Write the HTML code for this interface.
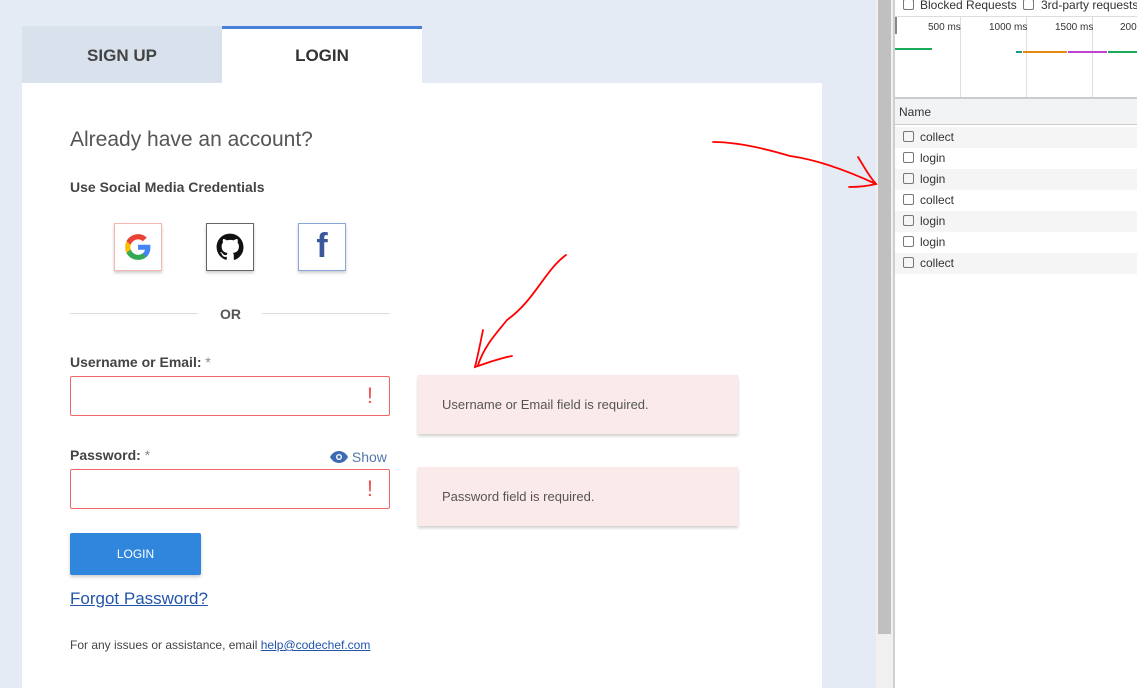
<!DOCTYPE html>
<html><head><style>
*{margin:0;padding:0;box-sizing:border-box}
body{width:1137px;height:688px;overflow:hidden;background:#e4ebf4;font-family:"Liberation Sans",sans-serif;position:relative;color:#444}
.abs{position:absolute;white-space:nowrap}
.tab{position:absolute;top:26px;height:57px;width:200px;text-align:center;line-height:60px;font-size:17px;font-weight:bold}
.inp{position:absolute;left:70px;width:320px;height:40px;border:1px solid #e66;background:#fff;border-radius:2px}
.inp span{position:absolute;right:16px;top:6px;color:#e55;font-size:22px}
.err{position:absolute;left:418px;width:320px;height:59px;background:#fbeaea;box-shadow:0 2px 3px rgba(0,0,0,.2);font-size:13px;color:#555;padding-left:24px;line-height:59px}
.soc{position:absolute;top:223px;width:48px;height:48px;background:#fff;box-shadow:0 2px 3px rgba(0,0,0,.2)}
.row{position:absolute;left:895px;width:242px;height:21px;font-size:12px;color:#333;line-height:21px;padding-left:25px}
.row i{position:absolute;left:8px;top:4px;width:11px;height:11px;border:1px solid #777;border-radius:2px}
</style></head><body>
<div class="tab" style="left:22px;background:#d9e1ec;color:#444">SIGN UP</div>
<div class="tab" style="left:222px;background:#fff;border-top:3px solid #4a80d8;line-height:54px;color:#333">LOGIN</div>
<div class="abs" style="left:22px;top:83px;width:800px;height:605px;background:#fff"></div>
<div class="abs" style="left:70px;top:128px;font-size:21px;color:#555;font-weight:300">Already have an account?</div>
<div class="abs" style="left:70px;top:179px;font-size:14px;font-weight:bold;color:#444">Use Social Media Credentials</div>
<div class="soc" style="left:114px;border:1px solid #f4b8b0"><svg width="46" height="46" viewBox="0 0 46 46"><g transform="translate(9,9) scale(1.17)"><path d="M22.6 12.3c0-.8-.1-1.6-.2-2.3H12v4.3h5.9c-.3 1.4-1 2.5-2.2 3.3v2.8h3.6c2.1-1.9 3.300-4.800 3.300-8.100z" fill="#4285F4"/><path d="M12 23c3 0 5.5-1 7.3-2.7l-3.6-2.8c-1 .7-2.2 1.1-3.7 1.1-2.9 0-5.3-1.9-6.2-4.5H2.1v2.9C3.9 20.6 7.7 23 12 23z" fill="#34A853"/><path d="M5.8 14.1c-.2-.7-.4-1.4-.4-2.1s.1-1.4.4-2.1V7H2.1C1.4 8.5 1 10.2 1 12s.4 3.5 1.1 5l3.7-2.9z" fill="#FBBC05"/><path d="M12 5.4c1.6 0 3.1.6 4.2 1.7l3.2-3.2C17.5 2.1 15 1 12 1 7.7 1 3.9 3.5 2.1 7l3.7 2.9c.9-2.6 3.3-4.5 6.2-4.5z" fill="#EA4335"/></g></svg></div>
<div class="soc" style="left:206px;border:1px solid #666"><svg width="46" height="46" viewBox="0 0 46 46"><path transform="translate(9,9) scale(1.17)" fill="#111" d="M12 .5C5.6.5.5 5.6.5 12c0 5.1 3.3 9.4 7.9 10.9.6.1.8-.3.8-.6v-2c-3.2.7-3.900-1.500-3.900-1.500-.5-1.300-1.300-1.700-1.300-1.700-1-.7.1-.7.1-.7 1.2.1 1.8 1.2 1.8 1.2 1 1.8 2.7 1.3 3.4 1 .1-.8.4-1.3.7-1.6-2.6-.3-5.2-1.3-5.2-5.7 0-1.3.5-2.3 1.2-3.1-.1-.3-.5-1.5.1-3.1 0 0 1-.3 3.2 1.2a11 11 0 0 1 5.8 0c2.2-1.5 3.2-1.2 3.2-1.2.6 1.6.2 2.8.1 3.1.7.8 1.2 1.8 1.2 3.1 0 4.4-2.7 5.4-5.2 5.7.4.4.8 1.1.8 2.2v3.2c0 .3.2.7.8.6A11.5 11.5 0 0 0 23.5 12C23.5 5.6 18.4.5 12 .5z"/></svg></div>
<div class="soc" style="left:298px;border:1px solid #8aa6d8"><div style="position:absolute;left:0;right:0;top:3px;text-align:center;font-size:34px;font-weight:bold;color:#3b5998">f</div></div>
<div class="abs" style="left:70px;top:313px;width:128px;height:1px;background:#ddd"></div>
<div class="abs" style="left:262px;top:313px;width:128px;height:1px;background:#ddd"></div>
<div class="abs" style="left:220px;top:306px;font-size:14px;font-weight:bold;color:#555">OR</div>
<div class="abs" style="left:70px;top:354px;font-size:14px;font-weight:bold;color:#444">Username or Email: <span style="color:#888;font-weight:normal">*</span></div>
<div class="inp" style="top:376px"><span>!</span></div>
<div class="abs" style="left:70px;top:447px;font-size:14px;font-weight:bold;color:#444">Password: <span style="color:#888;font-weight:normal">*</span></div>
<div class="abs" style="left:330px;top:449px;font-size:14px;color:#5577aa"><svg width="18" height="12" viewBox="0 0 18 12" style="vertical-align:-1px"><path d="M9 0C5 0 1.7 2.5 0 6c1.7 3.5 5 6 9 6s7.3-2.5 9-6C16.3 2.5 13 0 9 0z" fill="#3d6ab5"/><circle cx="9" cy="6" r="3" fill="#fff"/><circle cx="9" cy="6" r="1.6" fill="#3d6ab5"/></svg> Show</div>
<div class="inp" style="top:469px"><span>!</span></div>
<div class="abs" style="left:70px;top:533px;width:131px;height:42px;background:#2f86dc;color:#fff;font-size:12px;text-align:center;line-height:42px;border-radius:2px;box-shadow:0 2px 3px rgba(0,0,0,.2)">LOGIN</div>
<div class="abs" style="left:70px;top:589px;font-size:17px;color:#2255aa;text-decoration:underline">Forgot Password?</div>
<div class="abs" style="left:70px;top:638px;font-size:12px;color:#444">For any issues or assistance, email <span style="color:#2255aa;text-decoration:underline">help@codechef.com</span></div>
<div class="err" style="top:375px">Username or Email field is required.</div>
<div class="err" style="top:467px">Password field is required.</div>
<div class="abs" style="left:876px;top:0;width:17px;height:688px;background:#f0f0f0"></div>
<div class="abs" style="left:878px;top:0;width:13px;height:634px;background:#c0c0c0"></div>
<div class="abs" style="left:893px;top:0;width:2px;height:688px;background:#ccd0d5"></div>
<div class="abs" style="left:895px;top:0;width:242px;height:688px;background:#fff"></div>
<svg class="abs" style="left:0;top:0" width="900" height="688"><g fill="none" stroke="#f00" stroke-width="1.8" stroke-linecap="round"><path d="M566 255C545 270 535 300 507 320C495 335 485 345 478 365"/><path d="M483 330C480 345 478 355 475 367C490 362 500 358 512 356"/><path d="M713 142C740 142 770 150 790 156C820 160 850 172 876 184"/><path d="M858 157C865 168 868 175 876 184C868 186 860 187 849 187"/></g></svg>
<div class="abs" style="left:895px;top:0;width:242px;height:16px;font-size:12px;color:#333;line-height:10px"><i style="position:absolute;left:8px;top:-1px;width:11px;height:11px;border:1px solid #777;border-radius:2px"></i><span style="position:absolute;left:25px;top:0;white-space:nowrap">Blocked Requests</span><i style="position:absolute;left:128px;top:-1px;width:11px;height:11px;border:1px solid #777;border-radius:2px"></i><span style="position:absolute;left:146px;top:0;white-space:nowrap">3rd-party requests</span></div>
<div class="abs" style="left:895px;top:16px;width:242px;height:1px;background:#ddd"></div>
<div class="abs" style="left:895px;top:17px;width:2px;height:17px;background:#888"></div>
<div class="abs" style="left:960px;top:17px;width:1px;height:80px;background:#ddd"></div>
<div class="abs" style="left:1026px;top:17px;width:1px;height:80px;background:#ddd"></div>
<div class="abs" style="left:1092px;top:17px;width:1px;height:80px;background:#ddd"></div>
<div class="abs" style="left:928px;top:22px;font-size:10px;color:#333">500 ms</div>
<div class="abs" style="left:989px;top:22px;font-size:10px;color:#333">1000 ms</div>
<div class="abs" style="left:1055px;top:22px;font-size:10px;color:#333">1500 ms</div>
<div class="abs" style="left:1120px;top:22px;font-size:10px;color:#333">2000</div>
<div class="abs" style="left:895px;top:48px;width:37px;height:2px;background:#1aab5a"></div>
<div class="abs" style="left:1016px;top:51px;width:6px;height:2px;background:#1a9a8a"></div>
<div class="abs" style="left:1023px;top:51px;width:44px;height:2px;background:#e08a10"></div>
<div class="abs" style="left:1068px;top:51px;width:39px;height:2px;background:#c040d0"></div>
<div class="abs" style="left:1108px;top:51px;width:29px;height:2px;background:#1aab5a"></div>
<div class="abs" style="left:895px;top:97px;width:242px;height:2px;background:#ccc"></div>
<div class="abs" style="left:895px;top:99px;width:242px;height:26px;background:#f1f3f4;font-size:12px;line-height:27px;padding-left:4px;color:#333;border-bottom:1px solid #ccc">Name</div>
<div class="row" style="top:127px;background:#f5f5f5"><i></i>collect</div>
<div class="row" style="top:148px"><i></i>login</div>
<div class="row" style="top:169px;background:#f5f5f5"><i></i>login</div>
<div class="row" style="top:190px"><i></i>collect</div>
<div class="row" style="top:211px;background:#f5f5f5"><i></i>login</div>
<div class="row" style="top:232px"><i></i>login</div>
<div class="row" style="top:253px;background:#f5f5f5"><i></i>collect</div>
</body></html>
